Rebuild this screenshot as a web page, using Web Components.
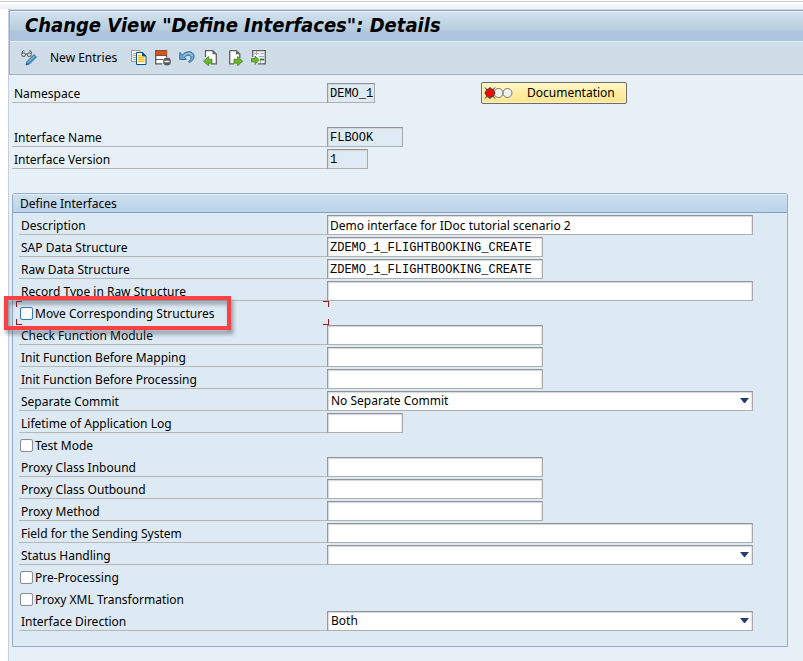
<!DOCTYPE html>
<html lang="en">
<head>
<meta charset="utf-8">
<title>Change View "Define Interfaces": Details</title>
<style>
  html, body { margin: 0; min-height: 100%; background: #fff; }
  body { font: 12px/16px "Noto Sans", "DejaVu Sans", sans-serif; color: #000; }
</style>
</head>
<body>
<view-window heading='Change View "Define Interfaces": Details'>
  <tool-bar slot="toolbar"></tool-bar>
  <form-header>
    <form-field label="Namespace" value="DEMO_1" size="ns" mono readonly><doc-button></doc-button></form-field>
    <form-gap></form-gap>
    <form-field label="Interface Name" value="FLBOOK" size="short" mono readonly></form-field>
    <form-field label="Interface Version" value="1" size="tiny" mono readonly></form-field>
  </form-header>
  <group-box heading="Define Interfaces">
    <form-field label="Description" value="Demo interface for IDoc tutorial scenario 2" size="full"></form-field>
    <form-field label="SAP Data Structure" value="ZDEMO_1_FLIGHTBOOKING_CREATE" size="medium" mono></form-field>
    <form-field label="Raw Data Structure" value="ZDEMO_1_FLIGHTBOOKING_CREATE" size="medium" mono></form-field>
    <form-field label="Record Type in Raw Structure" size="full"></form-field>
    <check-field label="Move Corresponding Structures" focused></check-field>
    <form-field label="Check Function Module" size="medium" mono></form-field>
    <form-field label="Init Function Before Mapping" size="medium" mono></form-field>
    <form-field label="Init Function Before Processing" size="medium" mono></form-field>
    <select-field label="Separate Commit" value="No Separate Commit"></select-field>
    <form-field label="Lifetime of Application Log" size="short"></form-field>
    <check-field label="Test Mode"></check-field>
    <form-field label="Proxy Class Inbound" size="medium" mono></form-field>
    <form-field label="Proxy Class Outbound" size="medium" mono></form-field>
    <form-field label="Proxy Method" size="medium" mono></form-field>
    <form-field label="Field for the Sending System" size="full"></form-field>
    <select-field label="Status Handling" value=""></select-field>
    <check-field label="Pre-Processing"></check-field>
    <check-field label="Proxy XML Transformation"></check-field>
    <select-field label="Interface Direction" value="Both"></select-field>
  </group-box>
</view-window>

<script>
class Base extends HTMLElement {
  connectedCallback() {
    if (this.shadowRoot) return;
    const root = this.attachShadow({ mode: 'open' });
    root.innerHTML = '<style>*{box-sizing:border-box}' + this.css() + '</style>' + this.html();
    this.fill(root);
  }
  attr(n) { return this.getAttribute(n) || ''; }
  css() { return ''; }
  html() { return ''; }
  fill() {}
}

customElements.define('view-window', class extends Base {
  css() { return `
    :host { display: block; padding-top: 1px; }
    .strip { height: 8px; border-top: 1px solid #cccfcf; background: linear-gradient(#fff 1px, #f7f8fb 2px, #eceff6); }
    .window { margin-left: 8px; min-height: calc(100vh - 9px); border-left: 1px solid #c5cfdc; border-top: 1px solid #ccd8e8; background: #e8f0f7; }
    header { border-left: 1px solid #9fb0c6; border-top: 1px solid #8fa3bd; border-bottom: 1px solid #a2b3c6; background: #cfdde8; }
    h1 { margin: 0; height: 31px; padding: 0 15px; border-top: 1px solid #e9f1f9; border-bottom: 1px solid #e6eef8;
      background: linear-gradient(#d2e2f0, #b6ccdc 62%, #adc4de 70%, #adc4de);
      font-family: "DejaVu Sans Condensed", "DejaVu Sans", sans-serif; font-size: 20px; line-height: 27px; font-weight: bold; font-style: italic; white-space: nowrap; }
    main { padding: 8px 15px 14px 3px; display: flex; flex-direction: column; gap: 24px; }`; }
  html() { return `<div class="strip"></div><div class="window"><header><h1></h1><slot name="toolbar"></slot></header><main><slot></slot></main></div>`; }
  fill(r) { r.querySelector('h1').textContent = this.attr('heading'); }
});

customElements.define('tool-bar', class extends Base {
  css() { return `
    :host { display: flex; align-items: center; gap: 8px; height: 32px; padding: 0 11px; }
    button { display: block; margin: 0; padding: 0; border: 0; background: none; font: inherit; color: inherit; line-height: 16px; white-space: nowrap; }
    svg { display: block; width: 16px; height: 16px; }
    .text { margin: 0 6px 0 5px; }`; }
  html() { return `
    <button aria-label="Display or change"><svg viewBox="0 0 16 16" fill="none">
      <path d="M1 3.500C1 1 2 .5 3.500 .8M10.500 3.500C10.500 1 9.500.5 8 .8" stroke="#555"/>
      <circle cx="2.600" cy="4.700" r="1.900" stroke="#555"/><circle cx="8.300" cy="4.700" r="1.900" stroke="#555"/><path d="M4.500 4h2" stroke="#555"/>
      <path d="M5 15l1-3.500 7-7 2.500 2.500-7 7z" fill="#4f91bf" stroke="#2d6a9a" stroke-width=".8"/><path d="M7 12.500l6.500-6.500" stroke="#9fc8e2"/><path d="M5 15l.8-2.300 1.500 1.500z" fill="#1e4d77"/></svg></button>
    <button class="text">New Entries</button>
    <button aria-label="Copy"><svg viewBox="0 0 16 16" fill="none">
      <path d="M9 1.500V.5H.5v11H5" fill="#eef0f2" stroke="#999"/><path d="M2 3.500h3M2 5.500h3M2 7.500h3M2 9.500h3" stroke="#aaa"/>
      <path d="M5.500 2.500h6l3.500 3.500v8.500H5.500z" fill="#fff" stroke="#00508c"/><path d="M11.500 2.500V6H15z" fill="#00508c" stroke="#00508c"/>
      <path d="M7 5.500h3M7 7.500h6.500M7 9.500h6.500M7 11.500h6.500" stroke="#f9bd14" stroke-width="1.300"/></svg></button>
    <button aria-label="Delete"><svg viewBox="0 0 16 16" fill="none">
      <path d="M11.500 7V.7H.7v13.100H7" fill="#fff" stroke="#5a5a5a" stroke-width="1.300"/><path d="M.7 5.500h10.800M.7 9.500H8" stroke="#5a5a5a"/>
      <path d="M1 1h11v4H1z" fill="#e0500e"/><circle cx="12" cy="11.500" r="3.900" fill="#5a5a5a"/><path d="M9.500 11.500h5" stroke="#fff" stroke-width="1.500"/></svg></button>
    <button aria-label="Undo"><svg viewBox="0 0 16 16">
      <path d="M.8 2.500V9.500H7.500L5.600 7.500C7.200 5 11 4.500 11.800 6.800c.6 2-.6 3.600-2.300 4.700l.6 1C13.500 11.300 15.500 8.500 15 5.500 14.300.8 6.800.3 3.500 5z" fill="#6fa7cc" stroke="#2d6f9f" stroke-linejoin="round"/><path d="M5 6C8 2.500 12.800 2.500 13.300 6" fill="none" stroke="#a5cae2"/></svg></button>
    <button aria-label="Previous entry"><svg viewBox="0 0 16 16">
      <path d="M2.500 7V.7h7.200L13.300 4v9.800H8" fill="#fff" stroke="#606060" stroke-width="1.300"/><path d="M9.500 1v3.200h3.500z" fill="#606060"/>
      <path d="M.5 11.200L5.500 6.500v2.700H9v4H5.500v2.500z" fill="#6fb52c" stroke="#3d8220" stroke-linejoin="round" stroke-width=".8"/></svg></button>
    <button aria-label="Next entry"><svg viewBox="0 0 16 16">
      <path d="M2.700 1v12.800H12V4L9 .7z" fill="#fff"/><path d="M2.700.7v13.100H7M2.700.7h6.500L12.800 4v4" fill="none" stroke="#606060" stroke-width="1.300"/><path d="M9 1v3.200h3.500z" fill="#606060"/>
      <path d="M15.600 11.200L10.600 6.500v2.700H7v4h3.600v2.500z" fill="#6fb52c" stroke="#3d8220" stroke-linejoin="round" stroke-width=".8"/></svg></button>
    <button aria-label="Other entry"><svg viewBox="0 0 16 16">
      <path d="M1.700.7h12.600v13.100H1.700z" fill="#f5f6f7"/><path d="M1.700 7V.7h12.600v13.100H7" fill="none" stroke="#606060" stroke-width="1.300"/>
      <path d="M3 3.500h5M9.500 3.500H13M5.500 1v4M8 6.500h5M9.500 13v-3" stroke="#a8abae"/><path d="M9 9.500h4" stroke="#1f7b44" stroke-width="1.800"/>
      <path d="M8 10.200L4 6v2.500H.5v3.400H4v2.600z" fill="#6fb52c" stroke="#3d8220" stroke-linejoin="round" stroke-width=".8"/></svg></button>`; }
});

customElements.define('form-header', class extends Base {
  css() { return ':host{display:flex;flex-direction:column;gap:2px}'; }
  html() { return '<slot></slot>'; }
});
customElements.define('form-gap', class extends Base {
  css() { return ':host{display:block;height:20px}'; }
});

customElements.define('group-box', class extends Base {
  css() { return `
    :host { display: block; border: 1px solid #8fafcc; border-radius: 3px 3px 0 0; background: #deeaf3; }
    h2 { margin: 0; height: 19px; padding: 0 7px; border-top: 1px solid #e4f0fa; border-bottom: 1px solid #7f9fc4; border-radius: 2px 2px 0 0;
      background: linear-gradient(#cddfef, #bdd3ea); font-size: 12px; line-height: 17px; font-weight: normal; }
    .rows { padding: 2px 34px 15px 6px; display: flex; flex-direction: column; gap: 2px; }`; }
  html() { return '<h2></h2><div class="rows"><slot></slot></div>'; }
  fill(r) { r.querySelector('h2').textContent = this.attr('heading'); }
});

const rowCss = `
  :host { display: grid; grid-template: 20px / 308px 1fr; }
  label { padding: 1px 2px 0; border-bottom: 1px solid #b4b6b8; line-height: 20px; white-space: nowrap; }
  input, select { display: block; width: 100%; height: 20px; margin: 0; padding: 0 0 0 2px; border: 1px solid; border-color: #8f9299 #a9abae #adafb1 #96999e;
    border-radius: 0; background: #fff; box-shadow: inset 1px 1px 1px #d5d7da, inset -1px 0 1px #e2e4e6; font: inherit; color: #000; outline: 0; }`;

customElements.define('form-field', class extends Base {
  css() { return rowCss + `
    :host([readonly]) { grid-template-columns: 315px 1fr; }
    .cell { display: flex; align-items: center; min-width: 0; }
    input { flex: none; }
    :host([mono]) input { padding-top: 1px; font-family: "Liberation Mono", monospace; }
    :host([readonly]) input { background: #deebf5; }
    :host([size="medium"]) input { width: 216px; }
    :host([size="short"]) input { width: 76px; }
    :host([size="ns"]) input { width: 48px; }
    :host([size="tiny"]) input { width: 41px; }
    ::slotted(*) { margin-left: 106px; }`; }
  html() { return '<label for="f"></label><div class="cell"><input id="f" type="text"><slot></slot></div>'; }
  fill(r) {
    r.querySelector('label').textContent = this.attr('label');
    const i = r.querySelector('input');
    i.value = this.attr('value');
    i.readOnly = this.hasAttribute('readonly');
  }
});

customElements.define('select-field', class extends Base {
  css() { return rowCss + `
    .cell { display: grid; align-items: center; }
    .cell > * { grid-area: 1 / 1; }
    select { appearance: none; padding: 0 20px 0 3px; }
    svg { justify-self: end; width: 9px; height: 5px; margin: 0 4px 2px; pointer-events: none; }`; }
  html() { return '<label for="s"></label><div class="cell"><select id="s"><option></option></select><svg viewBox="0 0 9 5"><path d="M0 0h9L5 5H4z" fill="#263c78"/></svg></div>'; }
  fill(r) {
    r.querySelector('label').textContent = this.attr('label');
    r.querySelector('option').textContent = this.attr('value');
  }
});

customElements.define('check-field', class extends Base {
  css() { return `
    :host { display: flex; align-items: center; height: 20px; position: relative; padding-left: 1px; }
    input { appearance: none; flex: none; width: 13px; height: 13px; margin: 0 2px 0 0; border: 1px solid #8b8e91; border-radius: 2px; background: #fff; box-shadow: inset 0 0 1px #bbb; }
    label { padding-top: 1px; line-height: 20px; white-space: nowrap; }
    .focus, .mark { display: none; }
    :host([focused]) input { border-color: #3a78b5; }
    :host([focused]) .focus { display: block; position: absolute; left: -3px; top: -2px; width: 313px; height: 24px; pointer-events: none;
      --c: #a01018;
      background:
        linear-gradient(var(--c) 0 0) 0 0 / 6px 1px, linear-gradient(var(--c) 0 0) 0 0 / 1px 6px,
        linear-gradient(var(--c) 0 0) 100% 0 / 6px 1px, linear-gradient(var(--c) 0 0) 100% 0 / 1px 6px,
        linear-gradient(var(--c) 0 0) 0 100% / 6px 1px, linear-gradient(var(--c) 0 0) 0 100% / 1px 6px,
        linear-gradient(var(--c) 0 0) 100% 100% / 6px 1px, linear-gradient(var(--c) 0 0) 100% 100% / 1px 6px;
      background-repeat: no-repeat; }
    :host([focused]) .mark { display: block; position: absolute; z-index: 1; left: -15px; top: -7px; width: 227px; height: 34px; border: 4px solid #fa4246;
      filter: drop-shadow(2px 4px 2px rgba(60,70,80,.55)); pointer-events: none; }`; }
  html() { return '<input id="c" type="checkbox"><label for="c"></label><div class="focus"></div><div class="mark"></div>'; }
  fill(r) { r.querySelector('label').textContent = this.attr('label'); }
});

customElements.define('doc-button', class extends Base {
  css() { return `
    :host { display: block; flex: none; }
    button { display: flex; align-items: center; gap: 13px; width: 146px; height: 22px; margin: 0; padding: 0 2px; border: 1px solid #6e6c66; border-radius: 2px;
      background: linear-gradient(#fff8cf, #ffeda2 45%, #fbe595); box-shadow: inset 0 0 0 1px #fdf3c0; font: inherit; color: #000; white-space: nowrap; }
    svg { flex: none; width: 30px; height: 14px; }`; }
  html() { return `<button><svg viewBox="0 0 30 14" fill="none">
    <circle cx="14.500" cy="7" r="4.500" fill="#f3f3ee" stroke="#777"/><circle cx="23.500" cy="7" r="4.500" fill="#f3f3ee" stroke="#777"/>
    <path d="M1 1.500l10 11M11 1.500l-10 11M6 1v12M.5 7h11" stroke="#222"/><circle cx="6" cy="7" r="4.500" fill="#f00" stroke="#444"/></svg>Documentation</button>`; }
});
</script>
</body>
</html>
